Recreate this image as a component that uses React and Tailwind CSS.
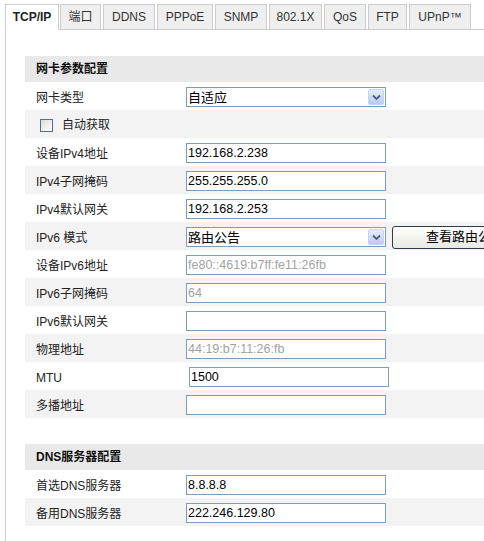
import React from 'react';

const tabs = [
    { label: 'TCP/IP', w: 'w-[54px]', active: true },
    { label: '端口', w: 'w-[41px]' },
    { label: 'DDNS', w: 'w-[52px]' },
    { label: 'PPPoE', w: 'w-[56px]' },
    { label: 'SNMP', w: 'w-[52px]' },
    { label: '802.1X', w: 'w-[53px]' },
    { label: 'QoS', w: 'w-[42px]' },
    { label: 'FTP', w: 'w-[39px]' },
    { label: 'UPnP™', w: 'w-[62px]' },
];

const netRows = [
    { label: '网卡类型', type: 'select', value: '自适应' },
    { label: '自动获取', type: 'checkbox' },
    { label: '设备IPv4地址', value: '192.168.2.238' },
    { label: 'IPv4子网掩码', value: '255.255.255.0' },
    { label: 'IPv4默认网关', value: '192.168.2.253' },
    { label: 'IPv6 模式', type: 'select', value: '路由公告', button: '查看路由公告' },
    { label: '设备IPv6地址', value: 'fe80::4619:b7ff:fe11:26fb', disabled: true },
    { label: 'IPv6子网掩码', value: '64', disabled: true },
    { label: 'IPv6默认网关', value: '' },
    { label: '物理地址', value: '44:19:b7:11:26:fb', disabled: true },
    { label: 'MTU', value: '1500', shifted: true },
    { label: '多播地址', value: '' },
];

const dnsRows = [
    { label: '首选DNS服务器', value: '8.8.8.8' },
    { label: '备用DNS服务器', value: '222.246.129.80' },
];

const TextBox = ({ value, disabled, shifted }) => (
    <input
        readOnly
        value={value}
        className={`h-[20px] w-[200px] border border-[#7f9db9] bg-white pl-[1px] text-[12.5px] outline-none ${disabled ? 'text-[#a3a3a3]' : 'text-black'} ${shifted ? 'ml-[3px]' : ''}`}
    />
);

const SelectBox = ({ value }) => (
    <div className="flex h-[20px] w-[200px] items-center border border-[#7f9db9] bg-white pl-[1px] pr-[1px]">
        <span className="flex-1 text-[13px] leading-none text-black">{value}</span>
        <span className="flex h-[16px] w-[16px] items-center justify-center rounded-[2px] border border-[#c3d3fd] bg-gradient-to-b from-[#e6eefc] to-[#b9cbf3]">
            <svg width="9" height="7" viewBox="0 0 9 7">
                <path d="M1 1.5 L4.5 5 L8 1.5" fill="none" stroke="#4d6185" strokeWidth="1.8" />
            </svg>
        </span>
    </div>
);

const Row = ({ row, gray }) => (
    <div className={`flex h-[28px] items-center ${gray ? 'bg-[#f3f3f3]' : 'bg-white'}`}>
        {row.type === 'checkbox' ? (
            <div className="flex items-center pl-[15px] pt-[2px]">
                <span className="h-[13px] w-[13px] border border-[#5d6d80] bg-gradient-to-br from-[#dcdcd7] to-white" />
                <span className="ml-[9px] text-[12px] text-[#222]">{row.label}</span>
            </div>
        ) : (
            <>
                <div className="w-[161px] pl-[11px] pt-[3px] text-[12px] text-[#222]">{row.label}</div>
                <div className="flex items-center pt-[2px]">
                    {row.type === 'select' ? (
                        <SelectBox value={row.value} />
                    ) : (
                        <TextBox value={row.value} disabled={row.disabled} shifted={row.shifted} />
                    )}
                    {row.button && (
                        <button className="ml-[6px] h-[23px] w-[146px] rounded-[3px] border border-[#2f3b48] bg-gradient-to-b from-white to-[#e9e8e2] text-[13px] text-black">
                            {row.button}
                        </button>
                    )}
                </div>
            </>
        )}
    </div>
);

const Section = ({ title, rows }) => (
    <div>
        <div className="flex h-[26px] items-center bg-[#e9e9e9] pl-[11px] text-[12px] font-bold text-[#111]">
            {title}
        </div>
        {rows.map((row, index) => (
            <Row key={row.label} row={row} gray={index % 2 === 1} />
        ))}
    </div>
);

const App = () => {
    return (
        <div className="h-[541px] w-[484px] overflow-hidden bg-white font-['Liberation_Sans','Noto_Sans_CJK_SC',sans-serif]">
            <div className="ml-[5px] w-[620px]">
                {/* Tab strip */}
                <div className="flex gap-[2px] border-b border-[#cccccc] pt-[4px]">
                    {tabs.map((tab, index) => (
                        <div
                            key={tab.label}
                            className={`-mb-px flex h-[26px] items-center justify-center border text-[12px] ${tab.w} ${index === 1 ? 'ml-[-1px]' : ''} ${
                                tab.active
                                    ? 'border-[#cccccc] border-b-white bg-white font-bold text-[#222]'
                                    : 'border-[#cccccc] bg-[#efefef] text-[#333]'
                            }`}
                        >
                            {tab.label}
                        </div>
                    ))}
                </div>

                {/* Panel */}
                <div className="border-l border-[#cccccc] pb-[20px] pl-[19px] pt-[26px]">
                    <Section title="网卡参数配置" rows={netRows} />
                    <div className="h-[26px]" />
                    <Section title="DNS服务器配置" rows={dnsRows} />
                </div>
            </div>
        </div>
    );
};

export default App;
